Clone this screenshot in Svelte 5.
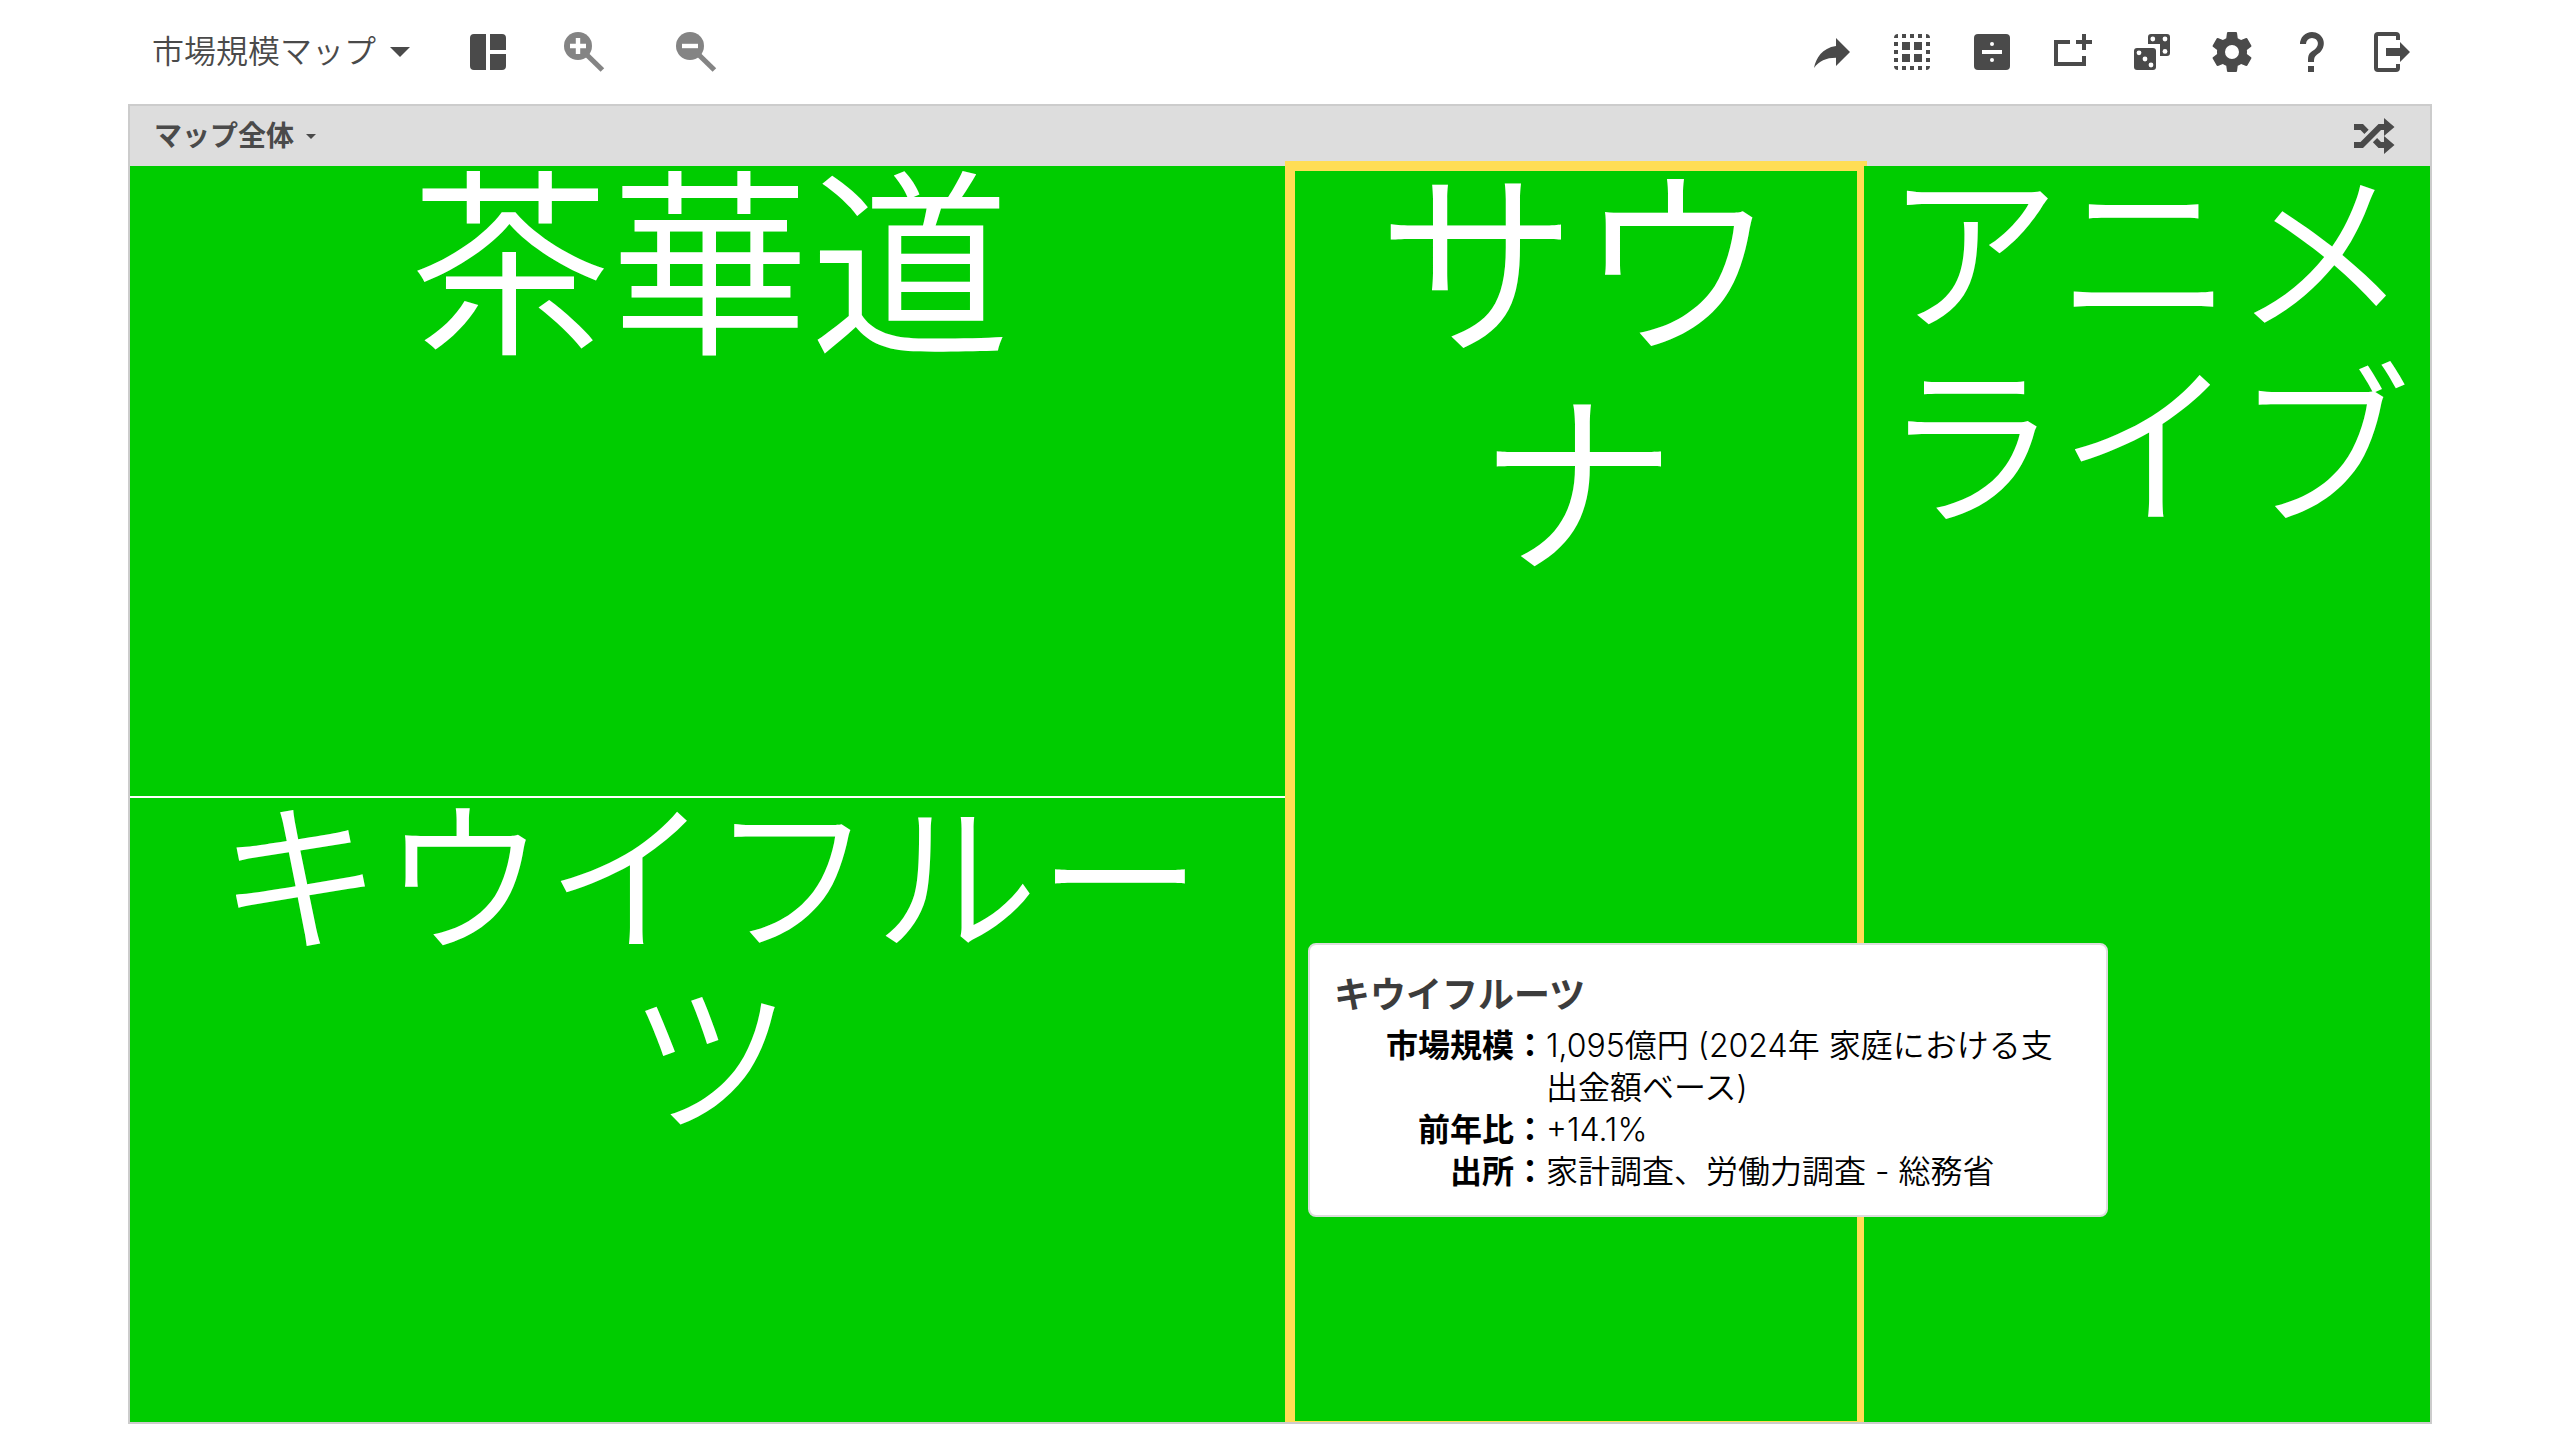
<script>
  // Treemap view: toolbar, map header, cells sized by market volume,
  // plus the detail tooltip of the hovered cell.
  let title = '市場規模マップ'
  let scope = 'マップ全体'

  let actions = [
    { id: 'share', label: '共有' },
    { id: 'select', label: 'すべて選択' },
    { id: 'divide', label: '分割' },
    { id: 'add', label: '追加' },
    { id: 'random', label: 'ランダム' },
    { id: 'settings', label: '設定' },
    { id: 'help', label: 'ヘルプ' },
    { id: 'exit', label: '終了' },
  ]

  let cells = [
    { name: '茶華道', area: 'tea', size: 200 },
    { name: 'キウイフルーツ', area: 'kiwi', size: 164 },
    { name: 'サウナ', area: 'sauna', size: 200 },
    { name: 'アニメライブ', area: 'anime', size: 176 },
  ]

  let selected = $state('sauna')

  let tip = {
    name: 'キウイフルーツ',
    rows: [
      ['市場規模', '1,095億円 (2024年 家庭における支出金額ベース)'],
      ['前年比', '+14.1%'],
      ['出所', '家計調査、労働力調査 - 総務省'],
    ],
  }

  // squares along the dotted frame of the select icon
  let dots = [7, 11, 15]
</script>

{#snippet icon(id)}
  <svg class="icon" viewBox="0 0 24 24" aria-hidden="true">
    {#if id === 'layout'}
      <path d="M5 3H11V21H5A2 2 0 0 1 3 19V5A2 2 0 0 1 5 3ZM13 3H19A2 2 0 0 1 21 5V11H13ZM13 13H21V19A2 2 0 0 1 19 21H13Z" />
    {:else if id === 'zoom-in' || id === 'zoom-out'}
      <circle cx="9" cy="9" r="7" />
      <path d="M13.5 13.5L21.2 21" fill="none" stroke="currentColor" stroke-width="2.6" />
      <path d={id === 'zoom-in' ? 'M5 9H13M9 5V13' : 'M5 9H13'} fill="none" stroke="#fff" stroke-width="2.2" />
    {:else if id === 'share'}
      <path d="M21 12L14 5V9C7 10 4 15 3 20C5.5 16.5 9 14.9 14 14.9V19Z" />
    {:else if id === 'select'}
      <path d="M5 3V5H3A2 2 0 0 1 5 3ZM19 3A2 2 0 0 1 21 5H19ZM3 19H5V21A2 2 0 0 1 3 19ZM19 19H21A2 2 0 0 1 19 21Z" />
      {#each dots as d}
        <path d="M{d} 3h2v2h-2zM{d} 19h2v2h-2zM3 {d}h2v2h-2zM19 {d}h2v2h-2z" />
      {/each}
      <path d="M7 7h4v4h-4zM13 7h4v4h-4zM7 13h4v4h-4zM13 13h4v4h-4z" />
    {:else if id === 'divide'}
      <rect x="3" y="3" width="18" height="18" rx="2" />
      <path d="M7 11h10v2h-10z" fill="#fff" />
      <circle cx="12" cy="8" r="1" fill="#fff" />
      <circle cx="12" cy="16" r="1" fill="#fff" />
    {:else if id === 'add'}
      <path d="M11 7H4V18H18V14M18 3V11M14 7H22" fill="none" stroke="currentColor" stroke-width="2" />
    {:else if id === 'random'}
      <path d="M11.5 3H19.5A1.5 1.5 0 0 1 21 4.5V12.5A1.5 1.5 0 0 1 19.5 14H16V8H10V4.5A1.5 1.5 0 0 1 11.5 3Z" />
      <rect x="3" y="10" width="11" height="11" rx="1.5" />
      <g fill="#fff">
        <circle cx="12.4" cy="5.5" r="1.2" />
        <circle cx="18.5" cy="5.5" r="1.2" />
        <circle cx="18.5" cy="11.7" r="1.2" />
        <circle cx="5.5" cy="12.4" r="1.2" />
        <circle cx="8.5" cy="15.5" r="1.2" />
        <circle cx="11.5" cy="18.5" r="1.2" />
      </g>
    {:else if id === 'settings'}
      <path d="M12,15.5A3.5,3.5 0 0,1 8.5,12A3.5,3.5 0 0,1 12,8.5A3.5,3.5 0 0,1 15.5,12A3.5,3.5 0 0,1 12,15.5M19.43,12.97C19.47,12.65 19.5,12.33 19.5,12C19.5,11.67 19.47,11.34 19.43,11L21.54,9.37C21.73,9.22 21.78,8.95 21.66,8.73L19.66,5.27C19.54,5.05 19.27,4.96 19.05,5.05L16.56,6.05C16.04,5.66 15.5,5.32 14.87,5.07L14.5,2.42C14.46,2.18 14.25,2 14,2H10C9.75,2 9.54,2.18 9.5,2.42L9.13,5.07C8.5,5.32 7.96,5.66 7.44,6.05L4.95,5.05C4.73,4.96 4.46,5.05 4.34,5.27L2.34,8.73C2.21,8.95 2.27,9.22 2.46,9.37L4.57,11C4.53,11.34 4.5,11.67 4.5,12C4.5,12.33 4.53,12.65 4.57,12.97L2.46,14.63C2.27,14.78 2.21,15.05 2.34,15.27L4.34,18.73C4.46,18.95 4.73,19.03 4.95,18.95L7.44,17.94C7.96,18.34 8.5,18.68 9.13,18.93L9.5,21.58C9.54,21.82 9.75,22 10,22H14C14.25,22 14.46,21.82 14.5,21.58L14.87,18.93C15.5,18.67 16.04,18.34 16.56,17.94L19.05,18.95C19.27,19.03 19.54,18.95 19.66,18.73L21.66,15.27C21.78,15.05 21.73,14.78 21.54,14.63L19.43,12.97Z" />
    {:else if id === 'help'}
      <path d="M10,19H13V22H10V19M12,2C17.35,2.22 19.68,7.62 16.5,11.67C15.67,12.67 14.33,13.33 13.67,14.17C13,15 13,16 13,17H10C10,15.33 10,13.92 10.67,12.92C11.33,11.92 12.67,11.33 13.5,10.67C15.92,8.43 15.32,5.26 12,5A3,3 0 0,0 9,8H6A6,6 0 0,1 12,2Z" />
    {:else if id === 'exit'}
      <path d="M15 6V4A1 1 0 0 0 14 3H5A1 1 0 0 0 4 4V20A1 1 0 0 0 5 21H14A1 1 0 0 0 15 20V18" fill="none" stroke="currentColor" stroke-width="2" />
      <path d="M9 10H16V7L21 12L16 17V14H9Z" />
    {:else if id === 'shuffle'}
      <path d="M17,3L22.25,7.5L17,12L22.25,16.5L17,21V18H14.26L11.44,15.18L13.56,13.06L15.5,15H17V9H15.5L6.5,18H2V15H5.26L14.26,6H17V3M2,6H6.5L9.32,8.82L7.2,10.94L5.26,9H2V6Z" />
    {/if}
  </svg>
{/snippet}

<div class="page">
  <header class="toolbar">
    <button class="title">{title}<span class="caret"></span></button>
    <button class="layout" aria-label="レイアウト">{@render icon('layout')}</button>
    <div class="zoom">
      <button aria-label="拡大">{@render icon('zoom-in')}</button>
      <button aria-label="縮小">{@render icon('zoom-out')}</button>
    </div>
    <nav class="actions">
      {#each actions as a}
        <button aria-label={a.label}>{@render icon(a.id)}</button>
      {/each}
    </nav>
  </header>

  <main class="map">
    <div class="map-head">
      <button class="scope">{scope}<span class="caret small"></span></button>
      <button aria-label="シャッフル">{@render icon('shuffle')}</button>
    </div>

    <div class="cells">
      {#each cells as c}
        <button
          class="cell {c.area}"
          class:selected={selected === c.area}
          style="font-size:{c.size}px"
          onclick={() => (selected = c.area)}
        >
          <span class="name">{c.name}</span>
        </button>
      {/each}

      <div class="tip" role="tooltip">
        <h2>{tip.name}</h2>
        <table>
          <tbody>
            {#each tip.rows as [label, value]}
              <tr>
                <th scope="row">{label}：</th>
                <td>{value}</td>
              </tr>
            {/each}
          </tbody>
        </table>
      </div>
    </div>
  </main>
</div>

<style>
  :global(body) {
    margin: 0;
    background: #fff;
  }

  .page {
    box-sizing: border-box;
    min-height: 100vh;
    padding: 0 5% 16px;
    display: flex;
    flex-direction: column;
    font-family: Inter, 'Noto Sans CJK JP', sans-serif;
    font-weight: 350;
    color: #4a4a4a;
  }

  button {
    margin: 0;
    padding: 0;
    border: 0;
    background: none;
    color: inherit;
    font: inherit;
    display: flex;
    align-items: center;
    cursor: pointer;
  }

  .icon {
    width: 48px;
    height: 48px;
    display: block;
    fill: currentColor;
  }

  .toolbar {
    height: 104px;
    padding: 0 16px 0 24px;
    display: flex;
    align-items: center;
  }

  .title {
    font-size: 32px;
    line-height: 48px;
    gap: 14px;
  }

  .caret {
    border: 10px solid transparent;
    border-top-color: currentColor;
    border-bottom: 0;
  }

  .caret.small {
    border-width: 5px;
    border-bottom: 0;
  }

  .layout {
    margin-left: 54px;
  }

  .zoom {
    margin-left: 48px;
    display: flex;
    gap: 64px;
    color: #848484;
  }

  .actions {
    margin-left: auto;
    display: flex;
    gap: 32px;
  }

  .map {
    flex: 1;
    display: flex;
    flex-direction: column;
    border: 2px solid #ccc;
  }

  .map-head {
    height: 60px;
    padding: 0 32px 0 24px;
    display: flex;
    align-items: center;
    justify-content: space-between;
    background: #ddd;
  }

  .scope {
    font-size: 28px;
    line-height: 40px;
    font-weight: 700;
    gap: 12px;
  }

  .cells {
    position: relative;
    flex: 1;
    display: grid;
    grid-template-columns: 1160fr 574fr 566fr;
    grid-template-rows: 632fr 624fr;
    grid-template-areas: 'tea sauna anime' 'kiwi sauna anime';
    /* the selection frame may run over the header, not over the bottom edge */
    clip-path: inset(-5px 0 0 0);
  }

  .cell {
    position: relative;
    align-items: flex-start;
    justify-content: center;
    padding: 0 8px;
    background: #00cc00;
    color: #fff;
    line-height: 1.1;
    text-align: center;
    word-break: break-all;
  }

  .name {
    margin-top: -0.05em;
  }

  .tea {
    grid-area: tea;
    border-bottom: 2px solid #fff;
  }

  .kiwi {
    grid-area: kiwi;
  }

  .sauna {
    grid-area: sauna;
  }

  .anime {
    grid-area: anime;
  }

  .selected::after {
    content: '';
    position: absolute;
    inset: -5px -3px -9px -5px;
    border: 10px solid #ffdd55;
  }

  .tip {
    position: absolute;
    left: 1178px;
    top: 777px;
    box-sizing: border-box;
    width: 800px;
    padding: 26px 24px 22px;
    border: 2px solid #ddd;
    border-radius: 8px;
    background: #fff;
    color: #000;
  }

  h2 {
    margin: 0 0 6px;
    font-size: 36px;
    line-height: 48px;
    font-weight: 700;
    color: #3c3c3c;
  }

  table {
    width: 100%;
    border-collapse: collapse;
    font-size: 32px;
    line-height: 42px;
  }

  th,
  td {
    padding: 0;
    vertical-align: top;
    text-align: left;
  }

  th {
    width: 212px;
    text-align: right;
    font-weight: 700;
    white-space: nowrap;
  }
</style>
